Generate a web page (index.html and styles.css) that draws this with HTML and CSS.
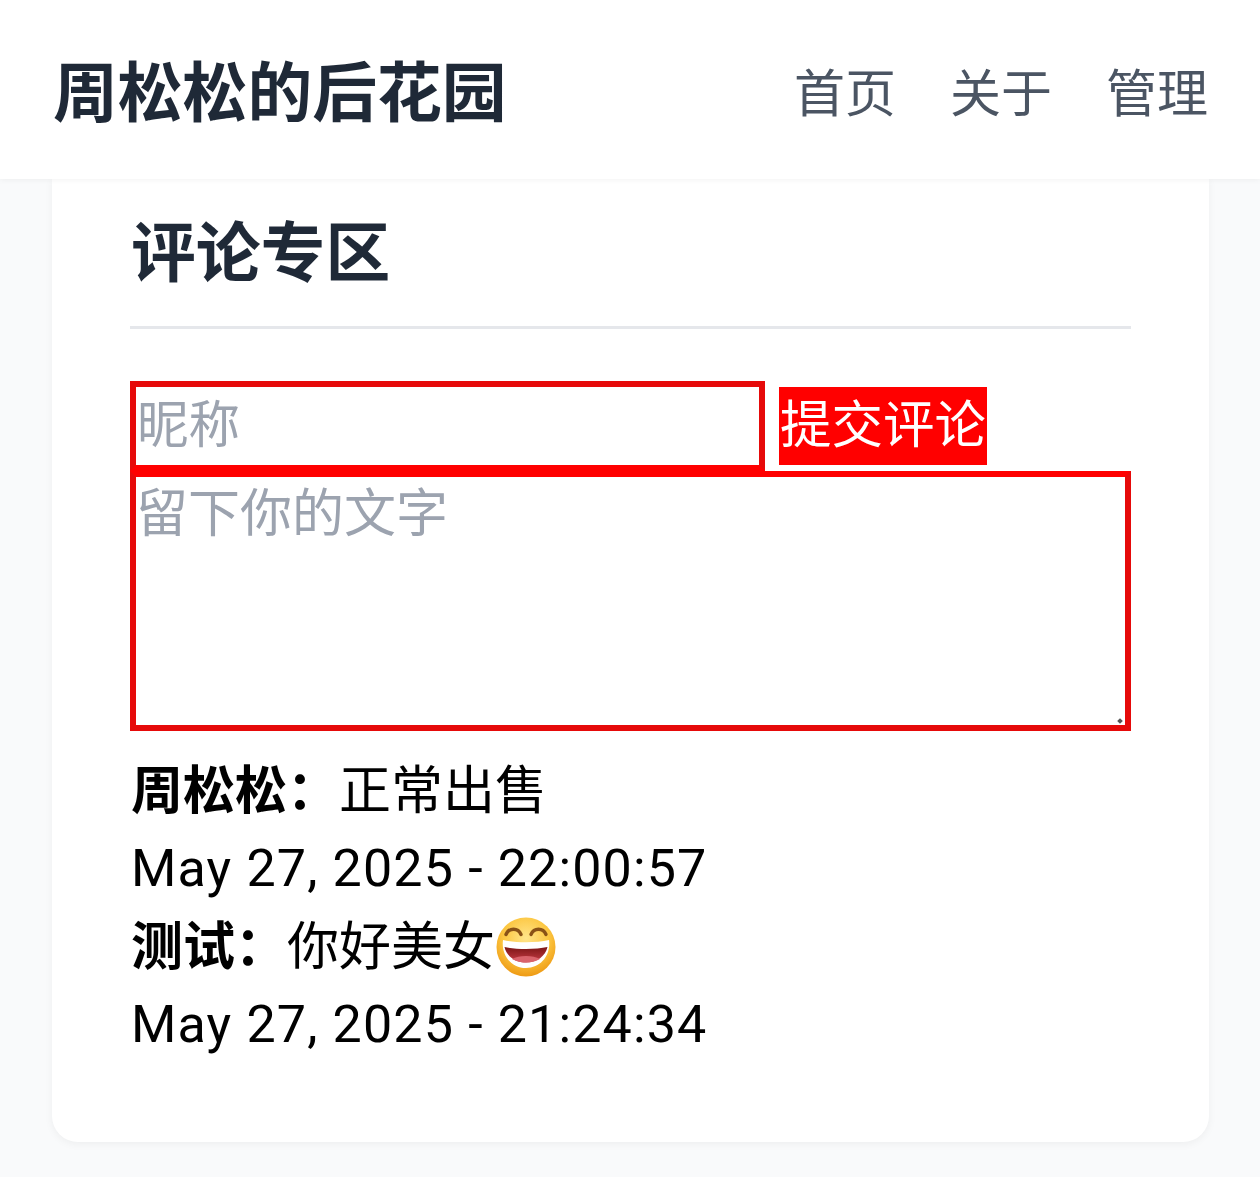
FILE: index.html
```html
<!DOCTYPE html>
<html lang="zh-CN">
<head>
<meta charset="utf-8">
<title>周松松的后花园</title>
<link rel="stylesheet" href="styles.css">
</head>
<body>
<header class="site-header">
  <a class="site-title" href="#">周松松的后花园</a>
  <nav class="site-nav">
    <a href="#">首页</a>
    <a href="#">关于</a>
    <a href="#">管理</a>
  </nav>
</header>
<main class="card">
  <h2 class="section-title">评论专区</h2>
  <form class="comment-form">
    <div class="form-row">
      <input class="name-input" type="text" placeholder="昵称">
      <button class="submit-btn" type="button">提交评论</button>
    </div>
    <div class="text-wrap">
      <textarea class="text-input" placeholder="留下你的文字"></textarea>
      <span class="grip"></span>
    </div>
  </form>
  <ul class="comments">
    <li>
      <div class="line"><strong>周松松：</strong>正常出售</div>
      <div class="line date">May 27, 2025 - 22:00:57</div>
    </li>
    <li>
      <div class="line"><strong>测试：</strong>你好美女<svg class="emoji" viewBox="0 0 60 60" aria-hidden="true">
        <defs>
          <radialGradient id="face" cx="50%" cy="35%" r="65%">
            <stop offset="0" stop-color="#ffe58a"/>
            <stop offset="0.6" stop-color="#fcc640"/>
            <stop offset="1" stop-color="#ee9a14"/>
          </radialGradient>
          <linearGradient id="mouth" x1="0" y1="0" x2="0" y2="1">
            <stop offset="0" stop-color="#7c1616"/>
            <stop offset="1" stop-color="#c83c46"/>
          </linearGradient>
        </defs>
        <circle cx="30" cy="30" r="29.500" fill="url(#face)"/>
        <path d="M10 17.500C13 10.500 22 10.500 25 17.500" fill="none" stroke="#8a5216" stroke-width="3.400" stroke-linecap="round"/>
        <path d="M35 17.500C38 10.500 47 10.500 50 17.500" fill="none" stroke="#8a5216" stroke-width="3.400" stroke-linecap="round"/>
        <path d="M7 23C20 26 40 26 53 23C55 38 45 51 30 51C15 51 5 38 7 23Z" fill="#fff"/>
        <path d="M8.500 30C20 32.500 40 32.500 51.500 30C49.500 39 41 45.500 30 45.500C19 45.500 10.500 39 8.500 30Z" fill="url(#mouth)"/>
        <path d="M16 42C23 38 37 38 44 42C40 44.500 35 45.500 30 45.500C25 45.500 20 44.500 16 42Z" fill="#d9636b"/>
      </svg></div>
      <div class="line date">May 27, 2025 - 21:24:34</div>
    </li>
  </ul>
</main>
</body>
</html>
```
FILE: styles.css
```css
* { box-sizing: border-box; }
html, body { margin: 0; padding: 0; }
body {
  height: 1177px;
  overflow: hidden;
  background: #f9fafb;
  font-family: "Noto Sans CJK SC", "Noto Sans", sans-serif;
  color: #000;
}
a { color: inherit; text-decoration: none; }

.site-header {
  position: relative;
  z-index: 2;
  height: 179px;
  padding: 0 52px 2px 53px;
  display: flex;
  align-items: center;
  justify-content: space-between;
  background: #fff;
  box-shadow: 0 1px 6px rgba(0, 0, 0, 0.05);
}
.site-title {
  font-size: 64.800px;
  font-weight: 700;
  line-height: 1;
  color: #1f2937;
}
.site-nav {
  display: flex;
  gap: 54px;
  margin-top: 3px;
  font-size: 51px;
  line-height: 1;
  color: #4b5563;
}

.card {
  height: 963px;
  margin: 0 51px 0 52px;
  padding: 0 78px;
  background: #fff;
  border-radius: 0 0 26px 26px;
  box-shadow: 0 2px 8px rgba(0, 0, 0, 0.05);
}
.section-title {
  margin: 0;
  height: 150px;
  padding: 29px 1px 0;
  font-size: 64.800px;
  line-height: 80px;
  font-weight: 700;
  color: #1f2937;
  border-bottom: 3px solid #e5e7eb;
}

.comment-form { margin-top: 52px; }
.form-row {
  display: flex;
  align-items: center;
  gap: 14px;
}
.name-input {
  width: 635px;
  height: 90px;
  padding: 0 1px 12px;
  border: 6px solid #e60a0a;
  border-bottom-color: #f00;
  border-radius: 0;
  background: #fff;
  font: inherit;
  font-size: 51.500px;
  outline: none;
}
.submit-btn {
  width: 208px;
  height: 78px;
  padding: 0 0 10px;
  border: 0;
  background: #f00;
  color: #fff;
  font: inherit;
  font-size: 51.500px;
  line-height: 1;
}
.text-wrap {
  position: relative;
  height: 260px;
}
.text-input {
  display: block;
  width: 100%;
  height: 100%;
  padding: 0;
  border: 6px solid #e60a0a;
  border-top-color: #f00;
  border-radius: 0;
  font: inherit;
  font-size: 52px;
  line-height: 66px;
  resize: none;
  outline: none;
}
.name-input::placeholder,
.text-input::placeholder { color: #9ca3af; opacity: 1; }
.grip {
  position: absolute;
  right: 9px;
  bottom: 8px;
  width: 4px;
  height: 4px;
  background: #555;
  transform: rotate(45deg);
}

.comments {
  list-style: none;
  margin: 17px 0 0;
  padding: 0;
  font-size: 52px;
  line-height: 78px;
}
.line { height: 78px; white-space: nowrap; padding-left: 1px; }
.line strong { font-weight: 700; }
.date {
  font-family: Roboto, "Noto Sans", sans-serif;
  letter-spacing: 1.150px;
  font-size: 52px;
  line-height: 86px;
}
.emoji {
  width: 60px;
  height: 60px;
  margin-left: 1px;
  vertical-align: -12px;
}
```
